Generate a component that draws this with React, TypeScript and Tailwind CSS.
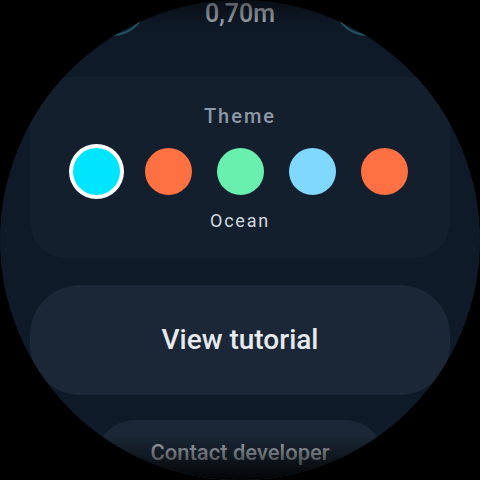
export default function App() {
  const swatches = [
    { color: "bg-[#00e5ff]", selected: true },
    { color: "bg-[#ff7043]", selected: false },
    { color: "bg-[#69f0ae]", selected: false },
    { color: "bg-[#80d8ff]", selected: false },
    { color: "bg-[#ff7043]", selected: false },
  ]

  return (
    <div className="w-[480px] h-[480px] bg-black font-['Roboto',_sans-serif]">
      <div className="relative w-full h-full rounded-full overflow-hidden bg-radial from-[#0f1a28] from-75% to-[#15253a]">
        <div className="flex flex-col items-center">
          {/* previous item, scrolled mostly out of view */}
          <div className="flex justify-center h-[72px] -mt-[36px]">
            <div className="w-[72px] h-[72px] rounded-full border-2 border-[#1d5260]" />
            <div className="w-[184px] pt-[35px] text-center text-[25px] leading-[30px] font-medium text-[#a3acb5]">
              0,70m
            </div>
            <div className="w-[72px] h-[72px] rounded-full border-2 border-[#1d5260]" />
          </div>

          {/* theme picker */}
          <div className="mt-[41px] w-[420px] h-[181px] rounded-[36px] bg-[#141f2e] flex flex-col items-center">
            <div className="pt-[27px] text-[20px] leading-[24px] font-medium tracking-[0.1em] text-[#8d99a6]">
              Theme
            </div>
            <div className="mt-[20px] flex gap-[25px]">
              {swatches.map((s, i) => (
                <div
                  key={i}
                  className={`w-[47px] h-[47px] rounded-full ${s.color} ${s.selected ? "ring-4 ring-white" : ""}`}
                />
              ))}
            </div>
            <div className="mt-[15px] text-[18px] leading-[22px] tracking-[0.1em] text-[#d2d8de]">
              Ocean
            </div>
          </div>

          <button className="mt-[27px] w-[420px] h-[110px] rounded-[50px] bg-[#1b2736] text-[28px] font-medium text-[#e6eaee]">
            View tutorial
          </button>

          <button className="mt-[25px] w-[290px] h-[100px] rounded-[40px] bg-[#1b2736] flex justify-center pt-[19px] text-[22px] leading-[28px] font-medium text-[#a7afb7]">
            Contact developer
          </button>
        </div>

        {/* edge fades */}
        <div className="absolute inset-x-0 top-0 h-[28px] bg-gradient-to-b from-black/50 to-transparent" />
        <div className="absolute inset-x-0 bottom-0 h-[44px] bg-gradient-to-b from-transparent to-black/90" />
      </div>
    </div>
  )
}
